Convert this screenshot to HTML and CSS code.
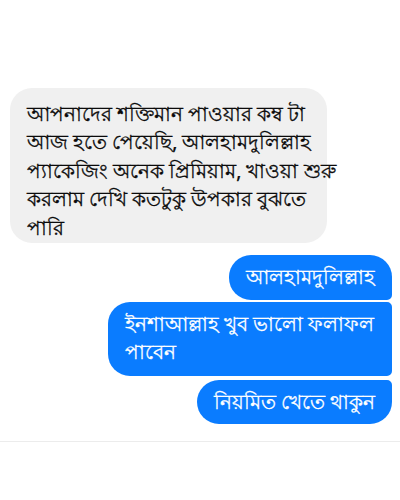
FILE: index.html
```html
<!DOCTYPE html>
<html lang="bn">
<head>
<meta charset="utf-8">
<link rel="stylesheet" href="styles.css">
</head>
<body>
<div class="chat">
  <div class="row in">
    <div class="bubble gray">আপনাদের শক্তিমান পাওয়ার কম্ব টা<br>আজ হতে পেয়েছি, আলহামদুলিল্লাহ<br>প্যাকেজিং অনেক প্রিমিয়াম, খাওয়া শুরু<br>করলাম দেখি কতটুকু উপকার বুঝতে<br>পারি</div>
  </div>
  <div class="group out">
    <div class="bubble blue first">আলহামদুলিল্লাহ</div>
    <div class="bubble blue mid">ইনশাআল্লাহ খুব ভালো ফলাফল<br>পাবেন</div>
    <div class="bubble blue last">নিয়মিত খেতে থাকুন</div>
  </div>
  <div class="divider"></div>
</div>
</body>
</html>
```
FILE: styles.css
```css
html, body {
  margin: 0;
  padding: 0;
  background: #ffffff;
}
body {
  font-family: "Noto Sans", "Liberation Sans", sans-serif;
  font-size: 19.5px;
  color: #0a0a0a;
}
.chat {
  width: 400px;
  height: 500px;
  padding-top: 88px;
  box-sizing: border-box;
  display: flex;
  flex-direction: column;
}
.row.in {
  padding-left: 10px;
}
.bubble {
  box-sizing: border-box;
  line-height: 28px;
  white-space: nowrap;
  -webkit-text-stroke: 0.3px currentColor;
}
.gray {
  width: 317px;
  height: 155px;
  background: #f0f0f0;
  border-radius: 22px;
  padding: 12px 0 0 17px;
  line-height: 28.4px;
}
.group.out {
  margin-top: 12px;
  padding-right: 8px;
  display: flex;
  flex-direction: column;
  align-items: flex-end;
  gap: 2px;
}
.blue {
  background: #0a7cff;
  color: #fff;
  padding: 8px 17px 9px 17px;
}
.first {
  width: 163px;
  height: 45px;
  border-radius: 22px 22px 5px 22px;
}
.mid {
  width: 284px;
  height: 74px;
  border-radius: 22px 5px 5px 22px;
  padding: 8px 17px 10px 17px;
}
.last {
  width: 195px;
  height: 44px;
  margin-top: 2px;
  border-radius: 22px 5px 22px 22px;
}
.divider {
  margin-top: 17px;
  height: 1px;
  background: #ececec;
}
```
